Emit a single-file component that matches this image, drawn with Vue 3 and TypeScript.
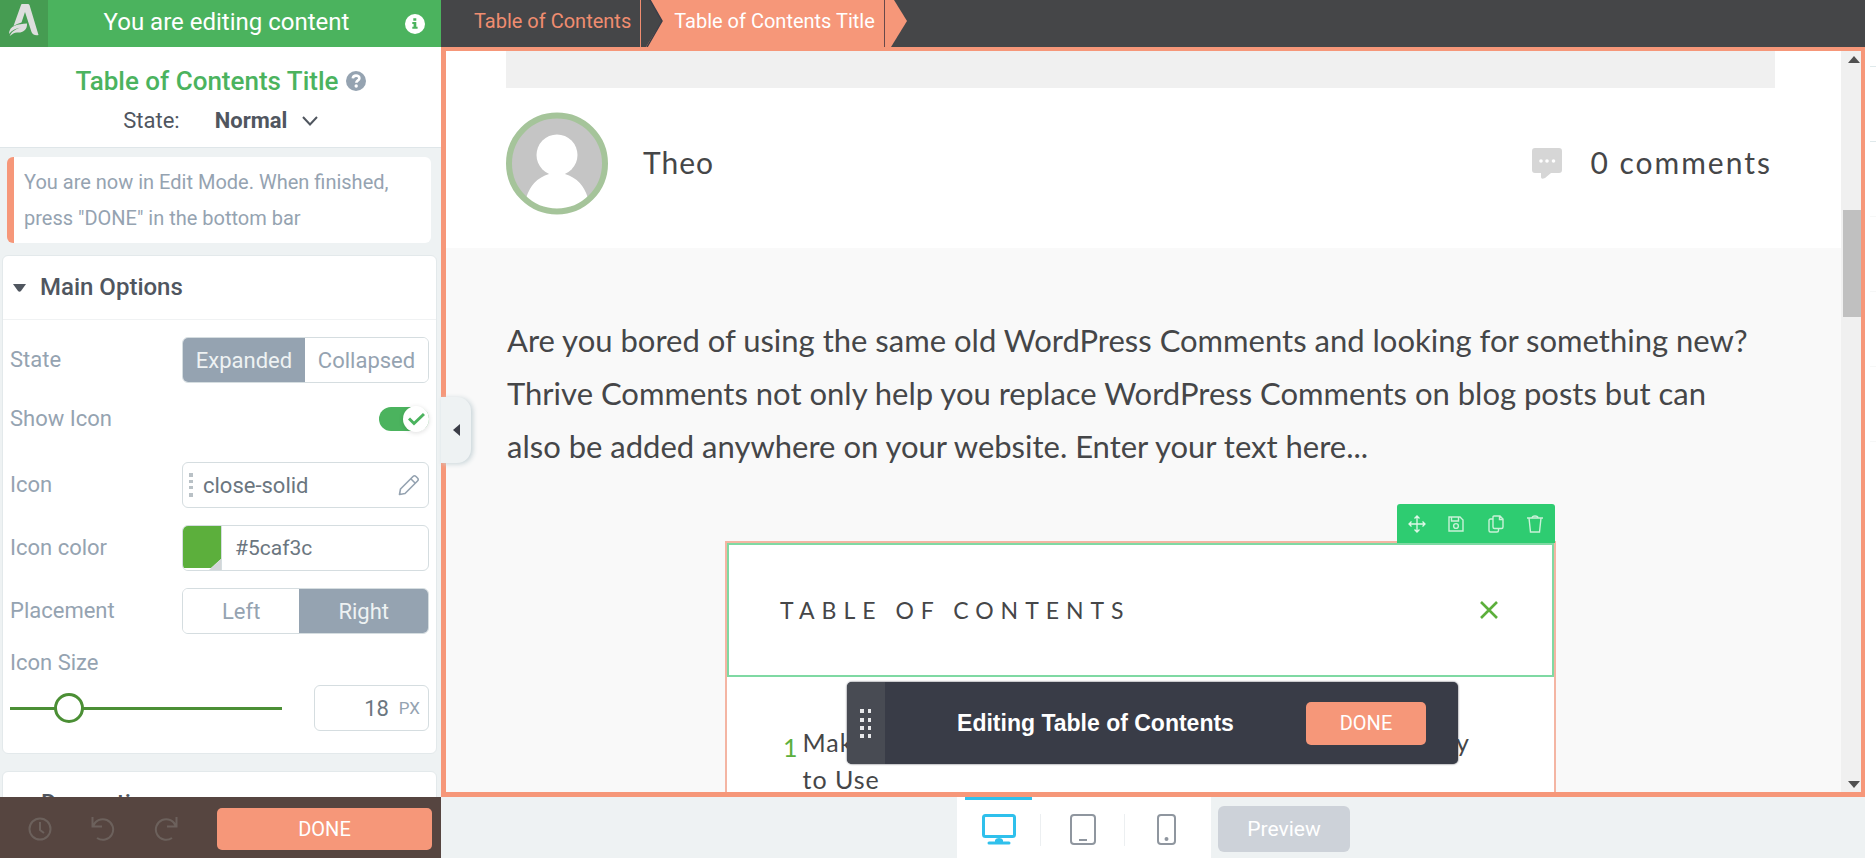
<script setup lang="ts">
import { ref } from 'vue'

const state = ref('Expanded')
const placement = ref('Right')
const showIcon = ref(true)
const iconName = ref('close-solid')
const iconColor = ref('#5caf3c')
const iconSize = ref(18)
const elementState = ref('Normal')
const device = ref('desktop')
</script>

<template>
  <div class="app">
    <aside class="sidebar">
      <header class="side-top">
        <a href="#" class="logo" aria-label="Architect home">
          <svg width="30" height="33" viewBox="0 0 30 33" fill="#dedede">
            <path d="M13 0h6q1 0 1.500 1L29.500 31q-5 1-7-3L16 8l-3.500 10.500Q8 19.500 4.500 22L12 1q.3-1 1-1Z" />
            <path d="M18 19.500c.5 6.500-4.500 9.500-9.500 9-3-.2-5 1.500-7.800 3.500C2.500 27.500 6.500 25 12 23.500 7 24 3.500 26 0 30c0-8.500 9-10 18-10.500Z" />
          </svg>
        </a>
        <span class="side-mode">You are editing content</span>
        <button class="bare info" type="button" aria-label="Information">
          <svg width="20" height="20" viewBox="0 0 20 20">
            <circle cx="10" cy="10" r="10" fill="#fff" />
            <path d="M8.300 4.200h3v2.600h-3ZM7.300 8h4v4.800h1.300v2H7.300v-2h1.300V10H7.300Z" fill="#4bb35e" />
          </svg>
        </button>
      </header>

      <section class="element-head">
        <h1>
          Table of Contents Title
          <svg width="20" height="20" viewBox="0 0 20 20">
            <circle cx="10" cy="10" r="10" fill="#95a3b1" />
            <path d="M6.800 7.400C7 5.500 8.200 4.600 10 4.600c2 0 3.400 1.100 3.400 2.700C13.400 9.500 10.300 9.300 10.300 11.800" fill="none" stroke="#fff" stroke-width="2.600" />
            <circle cx="10.200" cy="15" r="1.700" fill="#fff" />
          </svg>
        </h1>
        <div class="state-line">
          <label for="element-state">State:</label>
          <span class="state-pick">
            <select id="element-state" v-model="elementState">
              <option>Normal</option>
            </select>
            <svg width="16" height="10" viewBox="0 0 16 10" fill="none" stroke="#50565f" stroke-width="2"><path d="M1 1l7 7.500L15 1" /></svg>
          </span>
        </div>
      </section>

      <div class="panels">
        <p class="notice">You are now in Edit Mode. When finished, press "DONE" in the bottom bar</p>

        <section class="panel">
          <h2>
            <svg width="13" height="8" viewBox="0 0 13 8"><path d="M0 0h13L8 7q-1.500 1.500-3 0Z" fill="#50565f" /></svg>
            Main Options
          </h2>
          <div class="options">
            <div class="row">
              <span class="name">State</span>
              <div class="segments" role="group" aria-label="State">
                <button v-for="s in ['Expanded', 'Collapsed']" :key="s" type="button" :class="{ on: state === s }" @click="state = s">{{ s }}</button>
              </div>
            </div>
            <div class="row short">
              <label class="name" for="show-icon">Show Icon</label>
              <span class="toggle">
                <input id="show-icon" v-model="showIcon" type="checkbox" />
                <svg width="17" height="14" viewBox="0 0 17 14" fill="none" stroke="#4bb35e" stroke-width="3"><path d="M1 6.500l5 5L16 2" /></svg>
              </span>
            </div>
            <div class="row">
              <label class="name" for="icon-name">Icon</label>
              <div class="field">
                <svg width="4" height="24" viewBox="0 0 4 24" fill="#b9c1c6"><path d="M0 0h4v4H0zM0 7h4v3H0zM0 13h4v3H0zM0 20h4v4H0z" /></svg>
                <input id="icon-name" v-model="iconName" type="text" />
                <button class="bare" type="button" aria-label="Edit icon">
                  <svg width="22" height="22" viewBox="0 0 22 22" fill="none" stroke="#95a3b1" stroke-width="1.600" stroke-linejoin="round"><path d="M1.500 20.500l1-5.500L15 2.500q1.500-1.500 3 0l1.500 1.500q1.500 1.500 0 3L7 19.500ZM12.800 4.700l4.500 4.500" /></svg>
                </button>
              </div>
            </div>
            <div class="row">
              <label class="name" for="icon-color">Icon color</label>
              <div class="field color">
                <button class="swatch" type="button" aria-label="Pick colour">
                  <svg width="38" height="44" viewBox="0 0 38 44"><path d="M0 0h38v33l-10 9H0Z" :fill="iconColor" /><path d="M38 33v11H26Z" fill="#d3d6d8" /></svg>
                </button>
                <input id="icon-color" v-model="iconColor" type="text" />
              </div>
            </div>
            <div class="row">
              <span class="name">Placement</span>
              <div class="segments" role="group" aria-label="Placement">
                <button v-for="p in ['Left', 'Right']" :key="p" type="button" :class="{ on: placement === p }" @click="placement = p">{{ p }}</button>
              </div>
            </div>
            <div class="size">
              <label class="name" for="icon-size">Icon Size</label>
              <div class="size-row">
                <input id="icon-size" v-model.number="iconSize" type="range" min="0" max="100" />
                <div class="field amount">
                  <input v-model.number="iconSize" type="text" aria-label="Icon size in pixels" />
                  <span>PX</span>
                </div>
              </div>
            </div>
          </div>
        </section>

        <section class="panel next">
          <h2>Decoration</h2>
        </section>
      </div>

      <footer class="side-foot">
        <button class="bare" type="button" aria-label="History">
          <svg width="24" height="24" viewBox="0 0 24 24" fill="none" stroke="#6c615c" stroke-width="2"><circle cx="12" cy="12" r="10.500" /><path d="M12 5v8l4 3" /></svg>
        </button>
        <button class="bare" type="button" aria-label="Undo">
          <svg width="24" height="24" viewBox="0 0 24 24" fill="none" stroke="#6c615c" stroke-width="2"><path d="M1.500 0v9.500H11M2 9.500A10.300 10.300 0 1 1 6 21" /></svg>
        </button>
        <button class="bare" type="button" aria-label="Redo">
          <svg width="24" height="24" viewBox="0 0 24 24" fill="none" stroke="#6c615c" stroke-width="2"><path d="M22.500 0v9.500H13M22 9.500A10.300 10.300 0 1 0 18 21" /></svg>
        </button>
        <button class="coral" type="button">DONE</button>
      </footer>

      <button class="collapse" type="button" aria-label="Collapse sidebar">
        <svg width="7" height="12" viewBox="0 0 7 12"><path d="M7 0v12L0 6Z" fill="#3a3d47" /></svg>
      </button>
    </aside>

    <main class="work">
      <nav class="crumbs" aria-label="Breadcrumb">
        <a href="#">Table of Contents</a>
        <svg class="notch" width="23" height="47" viewBox="0 0 23 47">
          <path d="M9 0h14v47H5L21 21Z" fill="#f69779" /><path d="M9 0l12 21L6 47" fill="none" stroke="#3a3d47" stroke-width="1.500" />
        </svg>
        <a href="#" class="current" aria-current="page">Table of Contents Title</a>
        <svg width="22" height="47" viewBox="0 0 22 47"><path d="M0 0h9l13 21L6 47H0Z" fill="#f69779" /></svg>
      </nav>

      <div class="frame">
        <div class="page">
          <div class="post-head">
            <div class="banner"></div>
            <div class="byline">
              <svg width="102" height="103" viewBox="0 0 102 103">
                <defs><clipPath id="face"><circle cx="51" cy="51.500" r="46" /></clipPath></defs>
                <circle cx="51" cy="51.500" r="48" fill="#c5c5c5" />
                <g clip-path="url(#face)" fill="#fff">
                  <ellipse cx="51" cy="43" rx="20.500" ry="20.500" />
                  <path d="M43 58h16v4q17 5 23 24l3 17H17l3-17q6-19 23-24Z" />
                </g>
                <circle cx="51" cy="51.500" r="48" fill="none" stroke="#a5c49a" stroke-width="6" />
              </svg>
              <span class="author">Theo</span>
              <svg width="30" height="31" viewBox="0 0 30 31"><path d="M3 0h24q3 0 3 3v19q0 3-3 3h-8l-6 5q-4 2-4-1v-4H3q-3 0-3-3V3q0-3 3-3Z" fill="#d6d6d6" /><g fill="#fff"><circle cx="9" cy="13" r="1.800" /><circle cx="15" cy="13" r="1.800" /><circle cx="21.500" cy="13" r="1.800" /></g></svg>
              <span class="comments">0 comments</span>
            </div>
          </div>

          <p class="copy">
            Are you bored of using the same old WordPress Comments and looking for something new?<br />
            Thrive Comments not only help you replace WordPress Comments on blog posts but can<br />
            also be added anywhere on your website. Enter your text here...
          </p>

          <div class="toc">
            <div class="tools">
              <button class="bare" type="button" aria-label="Move">
                <svg width="18" height="18" viewBox="0 0 18 18" fill="none" stroke="#dff7e8" stroke-width="1.300"><path d="M9 1v16M1 9h16M6.500 3.500L9 1l2.500 2.500M6.500 14.500L9 17l2.500-2.500M3.500 6.500L1 9l2.500 2.500M14.500 6.500L17 9l-2.500 2.500" /></svg>
              </button>
              <button class="bare" type="button" aria-label="Save">
                <svg width="16" height="16" viewBox="0 0 16 16" fill="none" stroke="#c9f1d8" stroke-width="1.400"><path d="M1 1h11l3 3v11H1ZM3.500 1v4h7V1" /><circle cx="8" cy="10" r="2.400" /></svg>
              </button>
              <button class="bare" type="button" aria-label="Duplicate">
                <svg width="16" height="18" viewBox="0 0 16 18" fill="none" stroke="#c9f1d8" stroke-width="1.400"><path d="M6 1h6l3 3v8q0 1.500-1.500 1.500H6.500Q5 13.500 5 12V2q0-1 1-1ZM11.500 1v3.500H15M5 4H2.500Q1 4 1 5.500v10Q1 17 2.500 17H9q1.500 0 1.500-1.500v-2" /></svg>
              </button>
              <button class="bare" type="button" aria-label="Delete">
                <svg width="16" height="18" viewBox="0 0 16 18" fill="none" stroke="#c9f1d8" stroke-width="1.400"><path d="M0 3h16M5 3q0-2 3-2t3 2M2 3l1.500 14h9L14 3" /></svg>
              </button>
            </div>
            <div class="toc-head">
              <h3>TABLE OF CONTENTS</h3>
              <button class="bare" type="button" aria-label="Close table of contents">
                <svg width="18" height="18" viewBox="0 0 18 18" fill="none" :stroke="iconColor" stroke-width="2.600"><path d="M1 1l16 16M17 1L1 17" /></svg>
              </button>
            </div>
            <ol class="toc-list">
              <li>
                <span class="num">1</span>
                <div class="entry">
                  <div class="entry-line"><span>Mak</span><span>y</span></div>
                  <div>to Use</div>
                </div>
              </li>
            </ol>
          </div>
        </div>

        <div class="scrollbar">
          <svg width="12" height="7" viewBox="0 0 12 7"><path d="M6 0l6 7H0Z" fill="#505050" /></svg>
          <div class="track"><div class="thumb"></div></div>
          <svg width="12" height="7" viewBox="0 0 12 7"><path d="M0 0h12L6 7Z" fill="#505050" /></svg>
        </div>

        <div class="edit-bar">
          <span class="grip">
            <svg width="12" height="29" viewBox="0 0 12 29" fill="#e8e9eb"><path d="M0 0h4v4H0zM8 0h3v4H8zM0 9h4v4H0zM8 9h3v4H8zM0 17h4v4H0zM8 17h3v4H8zM0 25h4v4H0zM8 25h3v4H8z" /></svg>
          </span>
          <strong>Editing Table of Contents</strong>
          <button class="coral" type="button">DONE</button>
        </div>
      </div>

      <footer class="work-foot">
        <div class="devices">
          <button type="button" :class="{ active: device === 'desktop' }" aria-label="Desktop" @click="device = 'desktop'">
            <svg width="34" height="31" viewBox="0 0 34 31" fill="none" stroke="currentColor"><rect x="1.500" y="1.500" width="31" height="21" rx="2" stroke-width="3" /><path d="M7 29h20" stroke-width="3" stroke-linecap="round" /><path d="M13 29v-3q1-2 4-2t4 2v3Z" fill="currentColor" stroke="none" /></svg>
          </button>
          <i></i>
          <button type="button" :class="{ active: device === 'tablet' }" aria-label="Tablet" @click="device = 'tablet'">
            <svg width="26" height="31" viewBox="0 0 26 31" fill="none" stroke="currentColor" stroke-width="2"><rect x="1" y="1" width="24" height="29" rx="3" /><path d="M9 26h8" /></svg>
          </button>
          <i></i>
          <button type="button" :class="{ active: device === 'mobile' }" aria-label="Mobile" @click="device = 'mobile'">
            <svg width="19" height="31" viewBox="0 0 19 31" fill="none" stroke="currentColor" stroke-width="2"><rect x="1" y="1" width="17" height="29" rx="3" /><circle cx="9.500" cy="25" r="1" fill="currentColor" /></svg>
          </button>
        </div>
        <button class="preview" type="button">Preview</button>
      </footer>
    </main>

    <div class="gutter"><i></i><i></i><i></i><i></i><i></i><i></i></div>
  </div>
</template>

<style>
body { margin: 0; }
</style>

<style scoped>
* { box-sizing: border-box; }
.app {
  display: flex;
  height: 100vh;
  overflow: hidden;
  background: #fff;
  color: #50565f;
  font-family: Roboto, "Liberation Sans", sans-serif;
  font-size: 22px;
}
svg { display: block; flex: none; }
button, input, select { font: inherit; color: inherit; }
button { border: 0; padding: 0; cursor: pointer; }
.bare { background: none; display: grid; place-items: center; }
a { text-decoration: none; color: inherit; }
h1, h2, h3, p, ol { margin: 0; padding: 0; }

.sidebar { position: relative; z-index: 2; flex: 0 0 441px; display: flex; flex-direction: column; background: #eef2f3; }
.side-top { flex: 0 0 47px; display: flex; align-items: center; background: #4bb35e; color: #fff; font-size: 24px; padding-right: 16px; }
.logo { align-self: stretch; width: 48px; display: grid; place-items: center; background: #469c52; padding-bottom: 6px; }
.side-mode { flex: 1; text-align: center; line-height: 44px; align-self: flex-start; }
.element-head { flex: 0 0 101px; background: #fff; border-bottom: 1px solid #dfe6e9; padding-top: 18px; }
h1 { display: flex; justify-content: center; align-items: center; gap: 7px; color: #4bb35e; font-size: 26px; line-height: 32px; font-weight: 500; }
.state-line { display: flex; justify-content: center; align-items: center; gap: 35px; margin-top: 11px; line-height: 26px; }
.state-pick { display: grid; align-items: center; justify-items: end; }
.state-pick > * { grid-area: 1 / 1; }
.state-pick svg { pointer-events: none; }
select { appearance: none; background: none; border: 0; padding: 0 30px 0 0; font-weight: 700; }

.panels { flex: 1; min-height: 0; overflow: hidden; padding: 9px 4px 0 2px; }
.notice { margin: 0 6px 12px 5px; padding: 7px 20px 7px 10px; border-left: 7px solid #f69779; border-radius: 6px; background: #fff; color: #95a3b1; font-size: 20px; line-height: 36px; }
.panel { background: #fff; border: 1px solid #e3e9eb; border-radius: 6px; margin-bottom: 17px; }
h2 { display: flex; align-items: center; gap: 14px; padding: 0 10px; font-size: 24px; line-height: 63px; font-weight: 500; border-bottom: 1px solid #f0f2f3; }
.next h2 { padding-left: 38px; }
.options { display: flex; flex-direction: column; gap: 17px; padding: 17px 7px 22px; }
.row { display: flex; align-items: center; justify-content: space-between; }
.short { height: 38px; margin-bottom: 7px; }
.name { color: #95a3b1; line-height: 24px; }
.segments { display: flex; width: 247px; height: 46px; border: 1px solid #d5dde0; border-radius: 6px; overflow: hidden; }
.segments button { flex: 1 1 auto; background: #fff; color: #95a3b1; }
.segments .on { background: #95a3b1; color: #eef2f3; }
.toggle { display: grid; align-items: center; justify-items: end; }
.toggle > * { grid-area: 1 / 1; }
.toggle svg { margin-right: 4px; pointer-events: none; position: relative; }
.toggle input { appearance: none; margin: 0; width: 50px; height: 24px; border-radius: 12px; background: #4bb35e; display: flex; align-items: center; justify-content: flex-end; }
.toggle input::before { content: ""; flex: none; width: 26px; height: 26px; border-radius: 50%; background: #fff; box-shadow: 0 1px 5px #0002; }
.field { display: flex; align-items: center; width: 247px; height: 46px; border: 1px solid #d5dde0; border-radius: 6px; background: #fff; color: #6b7680; padding: 0 8px 0 6px; overflow: hidden; }
.field input { flex: 1; min-width: 0; border: 0; outline: 0; background: none; padding: 0 10px; }
.color { padding: 0; }
.color input { padding-left: 13px; font-size: 21px; }
.swatch { background: #fff; border-right: 1px solid #d5dde0; }
.size { display: flex; flex-direction: column; gap: 10px; }
.size-row { display: flex; align-items: center; justify-content: space-between; }
input[type="range"] { appearance: none; width: 272px; height: 30px; margin: 0; background: linear-gradient(#4b8f35, #4b8f35) center / 100% 3px no-repeat; }
input[type="range"]::-webkit-slider-thumb { appearance: none; box-sizing: border-box; width: 30px; height: 30px; border: 3px solid #4b8f35; border-radius: 50%; background: #fff; }
.amount { width: 115px; }
.amount input { text-align: right; }
.amount span { font-size: 17px; color: #95a3b1; }
.side-foot { flex: 0 0 61px; display: flex; align-items: center; gap: 39px; padding: 3px 9px 0 28px; background: #564540; }
.coral { background: #f69779; color: #fff; border-radius: 5px; font-size: 20px; }
.side-foot .coral { flex: 1; height: 42px; }
.collapse { position: absolute; left: 100%; top: 397px; width: 30px; height: 66px; border-radius: 0 14px 14px 0; background: #eef2f3; box-shadow: 2px 1px 5px #c8d4d8; display: grid; place-items: center; }

.work { flex: 1; min-width: 0; display: flex; flex-direction: column; }
.crumbs { flex: 0 0 47px; display: flex; background: #454648; color: #f08d70; font-size: 20px; line-height: 43px; padding-left: 33px; }
.crumbs a:first-child { padding-right: 9px; border-right: 1px solid #f08d70; }
.crumbs .current { background: #f69779; color: #fff; padding: 0 9px 0 10px; border-right: 1px solid #68494a; }
.frame { position: relative; flex: 1; min-height: 0; display: flex; border: solid #f69779; border-width: 4px 4px 5px 5px; background: #f9f9f9; }
.page { flex: 1; min-width: 0; overflow: hidden; font-family: Lato, "Open Sans", sans-serif; color: #454648; }
.post-head { background: #fff; padding: 0 66px 33px 60px; }
.banner { height: 37px; background: #f0f0f0; }
.byline { display: flex; align-items: center; padding-top: 24px; font-size: 30px; letter-spacing: 1px; }
.byline span { padding-bottom: 3px; }
.author { flex: 1; padding-left: 35px; }
.byline .comments { padding-left: 28px; padding-right: 3px; letter-spacing: 2px; }
.copy { padding: 66px 60px 0 61px; font-size: 31px; line-height: 53px; white-space: nowrap; }
.toc { position: relative; width: 831px; margin: 68px auto 0 279px; border: 2px solid #f4b5a3; background: #fff; height: 400px; }
.tools { position: absolute; right: -1px; bottom: 100%; width: 158px; height: 39px; display: grid; grid-template-columns: repeat(4, 1fr); background: #2ecc71; border-radius: 3px 3px 0 0; }
.toc-head { display: flex; align-items: center; justify-content: space-between; height: 134px; border: 2px solid #7fd9a3; padding: 0 54px 0 51px; }
h3 { font-size: 23px; font-weight: 400; letter-spacing: 7px; }
.toc-list { list-style: none; padding: 47px 84px 0 56px; font-size: 25px; line-height: 37px; letter-spacing: 1px; }
li { display: flex; gap: 4px; }
.num { color: #5caf3c; padding-top: 5px; }
.entry { flex: 1; }
.entry-line { display: flex; justify-content: space-between; }
.scrollbar { flex: 0 0 20px; display: flex; flex-direction: column; align-items: flex-end; background: #f0f0f0; padding: 5px 0 4px; }
.scrollbar > svg { margin-right: 1px; }
.track { flex: 1; width: 18px; padding-top: 147px; }
.thumb { height: 107px; background: #c0c0c0; }
.edit-bar { position: absolute; left: 401px; bottom: 28px; width: 611px; height: 82px; display: flex; align-items: center; background: #393c47; border-radius: 5px; color: #fff; overflow: hidden; box-shadow: 0 0 2px #393c47; }
.grip { align-self: stretch; width: 38px; display: grid; place-items: center; background: #484b53; }
.edit-bar strong { flex: 1; text-align: center; font-family: "Liberation Sans", Arial, sans-serif; font-size: 23px; }
.edit-bar .coral { width: 120px; height: 43px; margin-right: 32px; }
.work-foot { flex: 0 0 61px; display: flex; align-items: center; background: #eef2f3; padding-left: 516px; }
.devices { align-self: stretch; display: flex; align-items: center; background: #fff; width: 254px; padding-left: 8px; margin-right: 7px; }
.devices button { display: grid; place-items: center; align-self: stretch; flex: 0 0 67px; border-top: 3px solid transparent; background: none; color: #8f969f; }
.devices i { flex: 0 0 1px; height: 32px; margin: 4px 8px 0; background: #eceff1; }
.devices button.active { border-color: #2fc0ec; color: #2fc0ec; }
.preview { width: 132px; height: 46px; margin-top: 3px; border-radius: 6px; background: #cdd2d9; color: #fff; font-size: 21px; }
.gutter { flex: 0 0 11px; padding: 66px 0 0 5px; overflow: hidden; }
.gutter i { display: block; height: 75px; border-top: 1px solid #f7f8f8; }
.gutter i:nth-child(-n + 2) { border-color: #dfe9eb; }
</style>
